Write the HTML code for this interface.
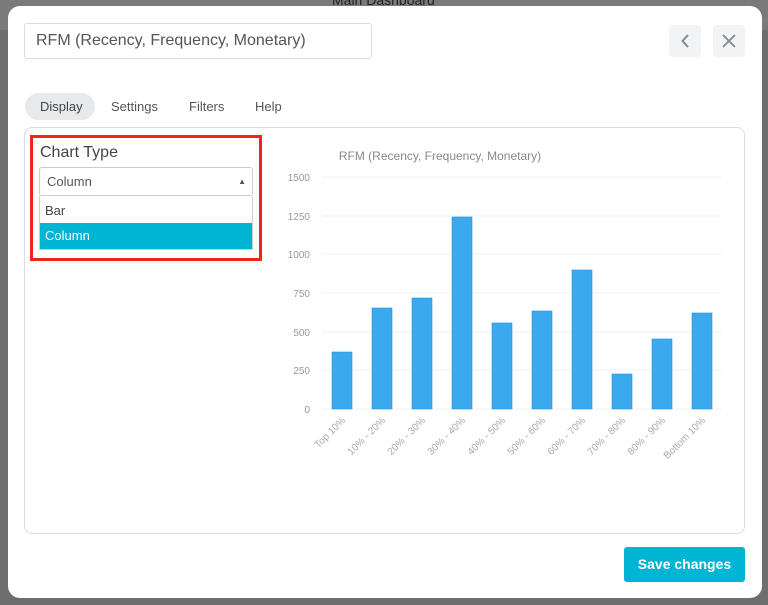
<!DOCTYPE html><html><head><style>
body{margin:0;width:768px;height:605px;background:#6e6e6e;font-family:"Liberation Sans",sans-serif;position:relative;overflow:hidden}
.top{position:absolute;left:0;top:0;width:768px;height:30px;background:#7a7a7a}
.m{position:absolute;left:8px;top:6px;width:754px;height:592px;background:#fff;border-radius:12px}
.a{position:absolute}
</style></head><body>
<div class="top"></div>
<div class="a" style="left:332px;top:-8px;color:#222;font-size:14px">Main Dashboard</div>
<div class="m"></div>
<div class="a" style="left:24px;top:23px;border:1px solid #ddd;border-radius:3px;font-size:16px;color:#555;line-height:34px;padding-left:11px;box-sizing:border-box;width:348px;height:36px">RFM (Recency, Frequency, Monetary)</div>
<div class="a" style="left:669px;top:25px;width:32px;height:32px;background:#f2f3f5;border-radius:4px"><svg width="32" height="32"><path d="M19 10l-5.5 6 5.5 6" stroke="#888" stroke-width="2" fill="none"/></svg></div>
<div class="a" style="left:713px;top:25px;width:32px;height:32px;background:#f2f3f5;border-radius:4px"><svg width="32" height="32"><path d="M10 10l12 12M22 10L10 22" stroke="#888" stroke-width="1.8" fill="none"/></svg></div>
<div class="a" style="left:25px;top:93px;width:70px;height:27px;background:#e8e9eb;border-radius:14px"></div>
<div class="a" style="left:40px;top:99px;font-size:13px;color:#444">Display</div>
<div class="a" style="left:111px;top:99px;font-size:13px;color:#555">Settings</div>
<div class="a" style="left:189px;top:99px;font-size:13px;color:#555">Filters</div>
<div class="a" style="left:255px;top:99px;font-size:13px;color:#555">Help</div>
<div class="a" style="left:24px;top:127px;width:721px;height:407px;border:1px solid #ddd;border-radius:8px;box-sizing:border-box"></div>
<div class="a" style="left:30px;top:135px;width:232px;height:126px;border:3px solid #f2231b;box-sizing:border-box"></div>
<div class="a" style="left:40px;top:144px;font-size:16px;color:#444">Chart Type</div>
<div class="a" style="left:39px;top:167px;width:214px;height:29px;border:1px solid #ccc;border-radius:3px;box-sizing:border-box;font-size:13px;color:#555;line-height:28px;padding-left:7px">Column<span style="position:absolute;right:6px;top:0;font-size:8px;color:#555">▲</span></div>
<div class="a" style="left:39px;top:196px;width:214px;height:54px;border:1px solid #ccc;box-sizing:border-box;border-top:none"></div>
<div class="a" style="left:45px;top:203px;font-size:13px;color:#444">Bar</div>
<div class="a" style="left:40px;top:223px;width:212px;height:26px;background:#00b4d3;color:#fff;font-size:13px;line-height:26px;padding-left:5px;box-sizing:border-box">Column</div>
<svg class="a" style="left:0;top:0" width="768" height="605" font-family="Liberation Sans" font-size="10" fill="#999">
<text x="440" y="160" text-anchor="middle" font-size="12" fill="#888">RFM (Recency, Frequency, Monetary)</text>
<g stroke="#f0f0f0"><line x1="322" x2="722" y1="177" y2="177"/><line x1="322" x2="722" y1="216" y2="216"/><line x1="322" x2="722" y1="254" y2="254"/><line x1="322" x2="722" y1="293" y2="293"/><line x1="322" x2="722" y1="332" y2="332"/><line x1="322" x2="722" y1="370" y2="370"/><line x1="322" x2="722" y1="409" y2="409"/></g>
<g text-anchor="end"><text x="310" y="181">1500</text><text x="310" y="220">1250</text><text x="310" y="258">1000</text><text x="310" y="297">750</text><text x="310" y="336">500</text><text x="310" y="374">250</text><text x="310" y="413">0</text></g>
<g fill="#3ba9ee" stroke="#2196e6" stroke-width="0.6">
<rect x="332" y="352" width="20" height="57"/><rect x="372" y="308" width="20" height="101"/><rect x="412" y="298" width="20" height="111"/><rect x="452" y="217" width="20" height="192"/><rect x="492" y="323" width="20" height="86"/><rect x="532" y="311" width="20" height="98"/><rect x="572" y="270" width="20" height="139"/><rect x="612" y="374" width="20" height="35"/><rect x="652" y="339" width="20" height="70"/><rect x="692" y="313" width="20" height="96"/></g>
<g text-anchor="end" fill="#aaa">
<text transform="translate(346,421) rotate(-45)">Top 10%</text><text transform="translate(386,421) rotate(-45)">10% - 20%</text><text transform="translate(426,421) rotate(-45)">20% - 30%</text><text transform="translate(466,421) rotate(-45)">30% - 40%</text><text transform="translate(506,421) rotate(-45)">40% - 50%</text><text transform="translate(546,421) rotate(-45)">50% - 60%</text><text transform="translate(586,421) rotate(-45)">60% - 70%</text><text transform="translate(626,421) rotate(-45)">70% - 80%</text><text transform="translate(666,421) rotate(-45)">80% - 90%</text><text transform="translate(706,421) rotate(-45)">Bottom 10%</text></g>
</svg>
<div class="a" style="left:624px;top:547px;width:121px;height:35px;background:#00b4d3;border-radius:3px;color:#fff;font-size:14px;font-weight:bold;text-align:center;line-height:35px">Save changes</div>
</body></html>
